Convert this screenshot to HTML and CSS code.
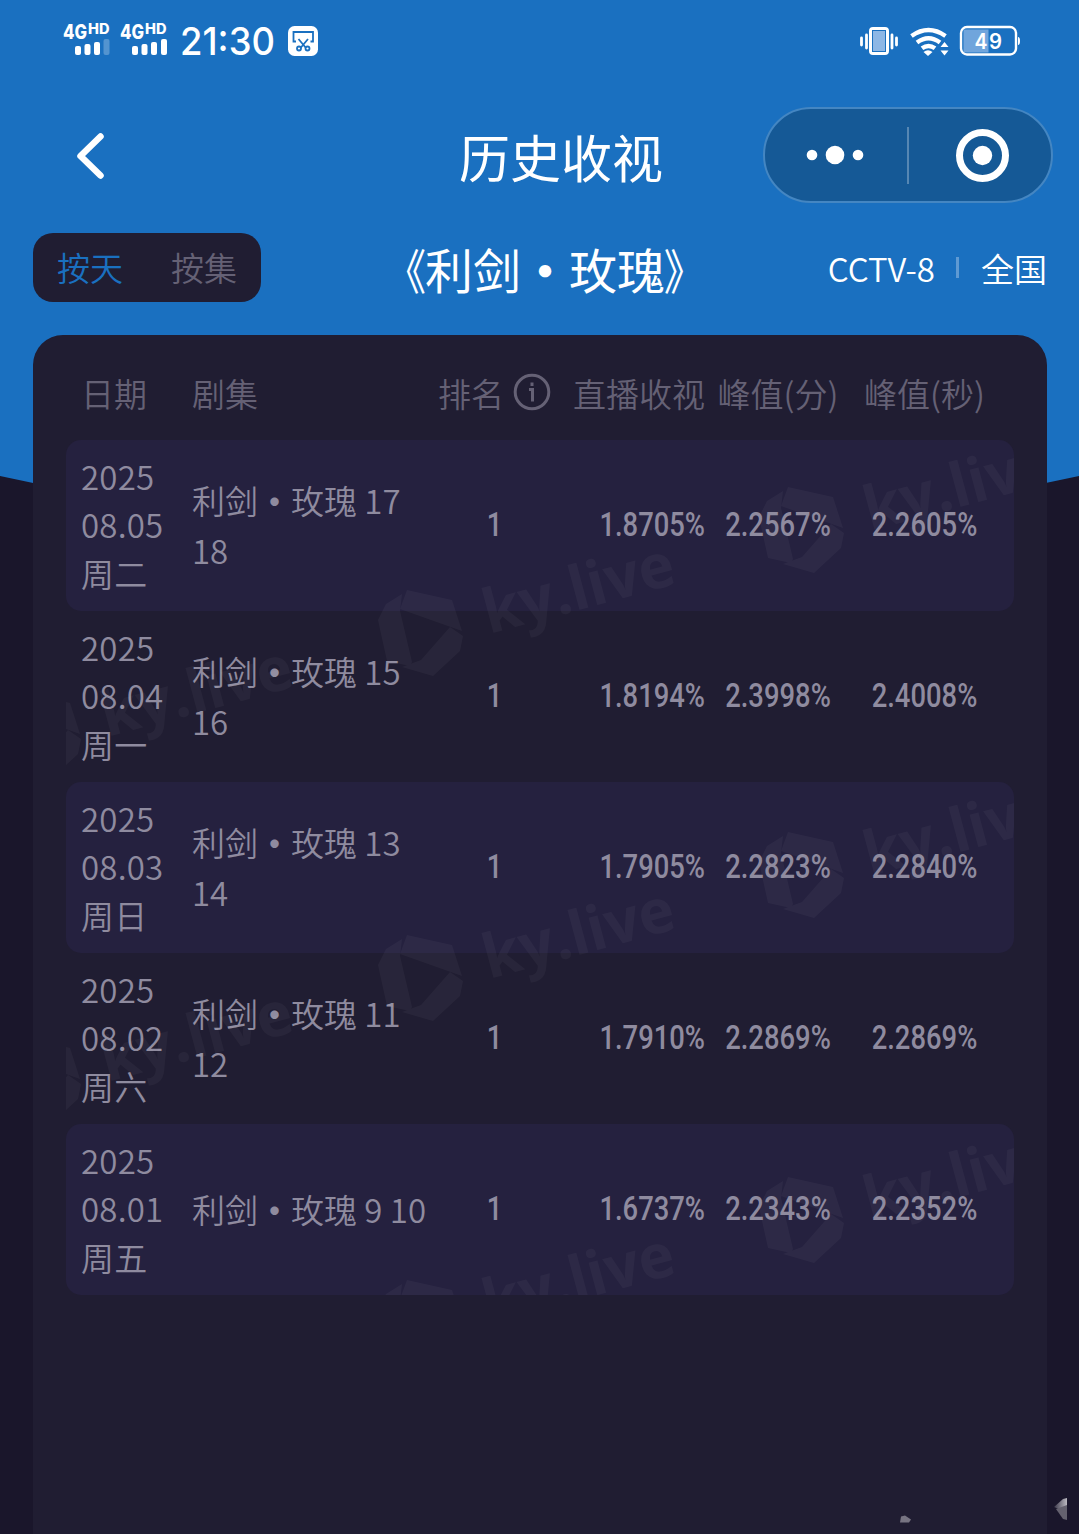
FILE: index.html
```html
<!DOCTYPE html>
<html lang="zh-CN">
<head>
<meta charset="utf-8">
<title>历史收视</title>
<link rel="stylesheet" href="styles.css">
</head>
<body>
<div class="page">
  <header class="status">
    <svg class="status-left" width="270" height="50" viewBox="60 16 270 50" fill="#fff">
      <g id="net">
        <text class="net-4g" x="63" y="38.500" textLength="24" lengthAdjust="spacingAndGlyphs">4G</text>
        <text class="net-hd" x="88" y="34" textLength="21.500" lengthAdjust="spacingAndGlyphs">HD</text>
        <rect x="75" y="46" width="6" height="9" rx="2"/>
        <rect x="84.500" y="44" width="6" height="11" rx="2"/>
        <rect x="94" y="42" width="6" height="13" rx="2"/>
      </g>
      <rect x="103.500" y="39" width="6" height="16" rx="2" opacity=".25"/>
      <use href="#net" x="57"/>
      <rect x="161" y="39" width="6" height="16" rx="2"/>
      <text class="clock" x="180" y="55" textLength="95" lengthAdjust="spacingAndGlyphs">21:30</text>
      <rect x="288" y="26" width="30" height="30" rx="6.500"/>
      <g fill="none" stroke="#1a70c0" stroke-width="1.800">
        <path d="M296 41.500h-2.500v-9.500h19.500v9.500h-2.500M298.500 39l7.500 9M308 39l-7.500 9"/>
        <circle cx="299" cy="48.500" r="2"/><circle cx="307.500" cy="48.500" r="2"/>
      </g>
    </svg>
    <svg width="164" height="50" viewBox="858 16 164 50" fill="#fff">
      <rect x="870.500" y="28.500" width="17" height="25" rx="2.500" fill="#fff" stroke="#fff" stroke-width="3"/>
      <rect x="872.500" y="30.500" width="13" height="21" fill="#8db7e5" stroke="#1a70c0"/>
      <path d="M866.500 35v13M861.500 38v7M892 35v13M896.500 38v7" stroke="#fff" stroke-width="2.800" stroke-linecap="round"/>
      <g fill="none" stroke="#fff" stroke-width="4.400">
        <path d="M911.500 36Q928.500 24 945.500 36M917 42.500Q928.500 34 940 42.500M922 48.300Q928.500 43.500 935 48.300"/>
      </g>
      <path d="M923.500 52Q928 48.500 932.500 52L928 56z"/>
      <path d="M940.500 47l4-5 4 5zM940.500 50.500l4 5 4-5z"/>
      <rect x="963.500" y="29.500" width="25" height="23" fill="#70a5dc"/>
      <rect x="961" y="27" width="55" height="27.500" rx="6" fill="none" stroke="#fff" stroke-width="2.400"/>
      <path d="M1018 37q2 0 2 4t-2 4z"/>
      <text class="battery" x="974.500" y="49" textLength="13" lengthAdjust="spacingAndGlyphs">4</text>
      <text class="battery" x="989" y="49" textLength="13" lengthAdjust="spacingAndGlyphs">9</text>
    </svg>
  </header>

  <nav class="nav">
    <svg class="back" width="38" height="54" viewBox="0 0 38 54" fill="none" stroke="#fff" stroke-width="6.500" stroke-linecap="round" stroke-linejoin="round"><path d="M30.500 8.500L10.500 28l20 19.500"/></svg>
    <h1 class="nav-title">历史收视</h1>
    <div class="capsule">
      <svg width="286" height="92" viewBox="765 109 286 92" fill="#fff">
        <circle cx="812" cy="155" r="5.300"/><circle cx="835" cy="155" r="9.300"/><circle cx="858" cy="155" r="5.300"/>
        <path d="M907 127h2v57h-2z" opacity=".28"/>
        <circle cx="982.500" cy="155.500" r="23" fill="none" stroke="#fff" stroke-width="7"/><circle cx="982.500" cy="155.500" r="9.700"/>
      </svg>
    </div>
  </nav>

  <section class="filters">
    <div class="tabs"><span class="tab active">按天</span><span class="tab">按集</span></div>
    <h2 class="show"><span class="open">《</span>利剑<b>・</b>玫瑰<span class="close">》</span></h2>
    <div class="channel"><span>CCTV-8</span><i class="bar"></i><span>全国</span></div>
  </section>

  <main class="panel">
    <div class="grid head">
      <span>日期</span><span>剧集</span>
      <span class="rank-head">排名
        <svg width="38" height="38" viewBox="0 0 38 38" fill="none" stroke="currentColor" stroke-width="3"><circle cx="19" cy="19" r="16.800"/><path d="M16 16.500h3.500v12M19 9.500v3.500"/></svg>
      </span>
      <span class="live">直播收视</span><span class="center">峰值(分)</span><span class="center">峰值(秒)</span>
    </div>
    <div class="rows">
      <svg class="mark" width="948" height="855" viewBox="66 440 948 855">
        <defs>
          <g id="logo">
            <path d="M407 590l45 10 10 31-62-22z"/>
            <path d="M402 594l-16 10-8 16 9 41 23 5 2-4-12-51z"/>
            <path d="M450 627l13 9-3 15-27 25-31-9 19-7z"/>
            <text x="0" y="0" transform="translate(489 634) rotate(-15)" textLength="196" lengthAdjust="spacingAndGlyphs">ky.live</text>
          </g>
        </defs>
        <use href="#logo" x="-382" y="103"/><use href="#logo" x="-382" y="448"/>
        <use href="#logo"/><use href="#logo" y="345"/><use href="#logo" y="690"/>
        <use href="#logo" x="381" y="-103"/><use href="#logo" x="381" y="242"/><use href="#logo" x="381" y="587"/>
      </svg>
      <div class="grid row"><span class="date">2025<br>08.05<br>周二</span><span class="ep">利剑<b>・</b>玫瑰 17 18</span><span class="num center">1</span><span class="num live">1.8705%</span><span class="num center">2.2567%</span><span class="num center">2.2605%</span></div>
      <div class="grid row"><span class="date">2025<br>08.04<br>周一</span><span class="ep">利剑<b>・</b>玫瑰 15 16</span><span class="num center">1</span><span class="num live">1.8194%</span><span class="num center">2.3998%</span><span class="num center">2.4008%</span></div>
      <div class="grid row"><span class="date">2025<br>08.03<br>周日</span><span class="ep">利剑<b>・</b>玫瑰 13 14</span><span class="num center">1</span><span class="num live">1.7905%</span><span class="num center">2.2823%</span><span class="num center">2.2840%</span></div>
      <div class="grid row"><span class="date">2025<br>08.02<br>周六</span><span class="ep">利剑<b>・</b>玫瑰 11 12</span><span class="num center">1</span><span class="num live">1.7910%</span><span class="num center">2.2869%</span><span class="num center">2.2869%</span></div>
      <div class="grid row"><span class="date">2025<br>08.01<br>周五</span><span class="ep">利剑<b>・</b>玫瑰 9 10</span><span class="num center">1</span><span class="num live">1.6737%</span><span class="num center">2.2343%</span><span class="num center">2.2352%</span></div>
    </div>
  </main>
  <svg class="corner" width="179" height="44" viewBox="890 1485 179 44">
    <defs><linearGradient id="fade" x1="0" x2="1"><stop offset="0" stop-color="#3c394b"/><stop offset="1" stop-color="#bbb9c0"/></linearGradient></defs>
    <path d="M900 1522.500l1-6 4-1 6 4-2 3z" fill="#777482"/>
    <path d="M1054 1507l9-8 4-1v8l-6 4z" fill="url(#fade)"/>
    <path d="M1056 1509l11-4v15l-4-1z" fill="#64616e"/>
  </svg>
</div>
</body>
</html>
```
FILE: styles.css
```css
* { box-sizing: border-box; }
body {
  margin: 0;
  background: #1a162b;
  font-family: "Noto Sans CJK SC", sans-serif;
  font-weight: 350;
  font-size: 33px;
}
.page {
  position: relative;
  display: flex;
  flex-direction: column;
  width: 1079px;
  height: 1534px;
  overflow: hidden;
  background: #1a162b;
}
.page::before {
  content: "";
  position: absolute;
  inset: 0 0 auto;
  height: 600px;
  background: #1a70c0;
  clip-path: polygon(0 0, 100% 0, 100% 476px, 50% 590px, 0 476px);
}
.page > * { position: relative; }

.status {
  display: flex;
  justify-content: space-between;
  height: 91px;
  padding: 16px 57px 0 60px;
}
.net-4g { font: 800 20px Inter, sans-serif; }
.net-hd { font: 800 14px Inter, sans-serif; }
.clock { font: 500 38.500px Inter, sans-serif; }
.battery { font: 600 21px Inter, sans-serif; }

.nav {
  display: grid;
  grid-template-columns: 381px 1fr 290px;
  align-items: center;
  height: 128px;
  padding: 0 26px 0 70px;
  color: #fff;
}
.nav-title {
  margin: 2px 0 0;
  padding-left: 8px;
  font-size: 51px;
  font-weight: 400;
  line-height: 74px;
  white-space: nowrap;
}
.capsule {
  width: 290px;
  height: 96px;
  border: 2px solid #4486c2;
  border-radius: 48px;
  background: #155996;
}
.capsule svg { display: block; }

.filters {
  display: grid;
  grid-template-columns: 344px 336px 1fr;
  align-items: center;
  height: 116px;
  padding: 0 32px 19px 33px;
  color: #fff;
}
.tabs {
  display: flex;
  justify-content: center;
  gap: 48px;
  width: 228px;
  height: 69px;
  border-radius: 20px;
  background: #201d32;
  line-height: 69px;
}
.tab { color: #656175; }
.tab.active { color: #1a70c0; }
.show {
  margin: 0;
  font-size: 48px;
  font-weight: 400;
  line-height: 66px;
  white-space: nowrap;
}
.open, .close { display: inline-block; transform: scaleX(.85); }
.open { transform-origin: 116% 50%; }
.close { transform-origin: -16% 50%; }
.channel {
  display: flex;
  align-items: center;
  justify-content: flex-end;
  line-height: 66px;
}
.bar { width: 3px; height: 21px; margin: 0 22px 0 21px; background: #5f9ad3; }

.panel {
  width: 1014px;
  flex: 1;
  margin: 0 auto;
  padding: 0 33px;
  border-radius: 30px 30px 0 0;
  background: #201d32;
  color: #8f8b9f;
}
.grid {
  display: grid;
  grid-template-columns: 111px 246px 113px 154px 146px 147px;
  align-items: center;
  padding-left: 15.500px;
}
.head { height: 105px; padding-top: 10px; color: #656175; white-space: nowrap; }
.rank-head { display: flex; align-items: center; gap: 9px; }
.rank-head svg { margin-top: -2px; }
.live { text-align: right; }
.center { text-align: center; }
.rows { position: relative; }
.mark { position: absolute; inset: 0; fill: #fff; opacity: .035; pointer-events: none; }
.mark text { font: 700 61px "Open Sans", sans-serif; }
.row { height: 171px; padding-bottom: 2px; border-radius: 15px; }
.row:nth-of-type(odd) { background: #25213f; }
.date { line-height: 48.500px; letter-spacing: .2px; }
.ep { line-height: 50px; }
.num {
  font: 500 33px/40px Roboto, sans-serif;
  transform: scaleX(.83);
}
.num.live { transform-origin: right; }
.corner { position: absolute; right: 10px; bottom: 5px; }
```
